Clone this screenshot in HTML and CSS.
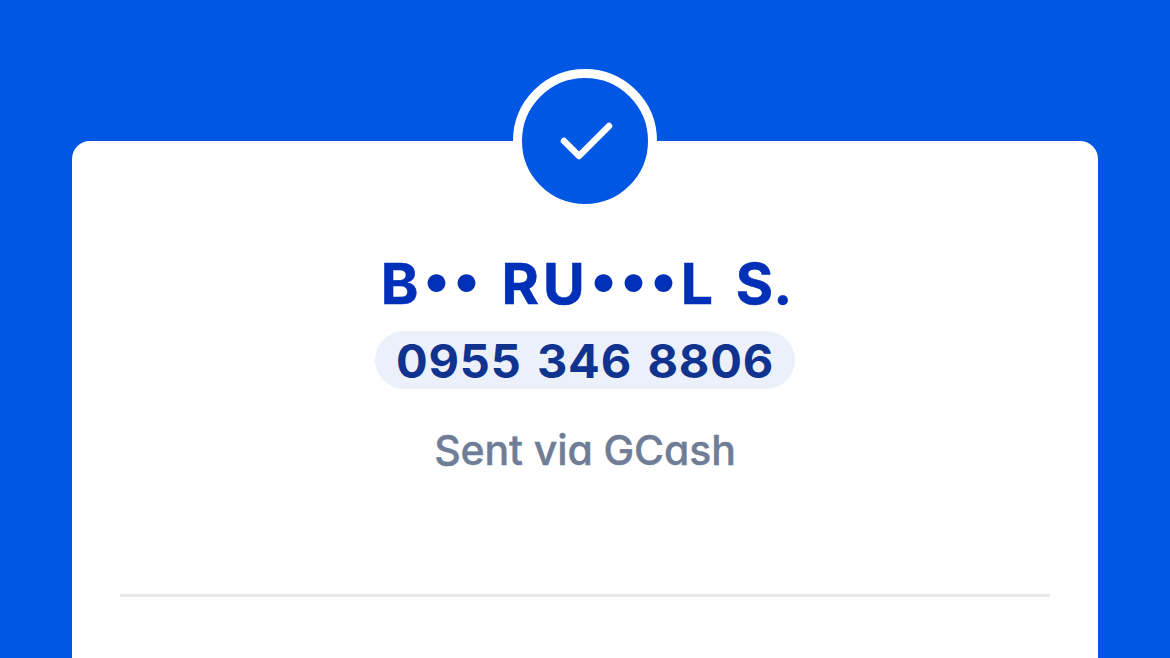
FILE: index.html
```html
<!DOCTYPE html>
<html lang="en">
<head>
    <meta charset="UTF-8">
    <meta name="viewport" content="width=device-width, initial-scale=1.0">
    <title>GCash Receipt</title>
    <link rel="stylesheet" href="styles.css">
</head>
<body>
    <main class="receipt">
        <div class="status">
            <svg width="64" height="48" viewBox="0 0 64 48" fill="none">
                <path d="M11 24L26 39L56 9" stroke="white" stroke-width="6.5" stroke-linecap="round" stroke-linejoin="round"/>
            </svg>
        </div>

        <h1 class="name">
            <span class="word"><span class="letters">B</span><span class="dot">•</span><span class="dot">•</span></span>
            <span class="word"><span class="letters wide">RU</span><span class="dot">•</span><span class="dot">•</span><span class="dot">•</span><span class="letters last">L</span></span>
            <span class="word">S.</span>
        </h1>
        <div class="phone">0955 346 8806</div>
        <p class="sent">Sent via GCash</p>
        <hr class="divider">
    </main>
</body>
</html>
```

FILE: styles.css
```css
* {
    box-sizing: border-box;
}
body {
    margin: 0;
    height: 658px;
    padding: 141px 72px 0;
    overflow: hidden;
    background-color: #0057e4;
    font-family: Inter, sans-serif;
}
.receipt {
    display: flex;
    flex-direction: column;
    align-items: center;
    height: 517px;
    padding: 0 48px;
    background-color: white;
    border-radius: 18px 18px 0 0;
}
.status {
    display: flex;
    align-items: center;
    justify-content: center;
    width: 144px;
    height: 144px;
    margin-top: -72px;
    border: 9px solid white;
    border-radius: 50%;
    background-color: #0057e4;
}
.name {
    display: flex;
    gap: 20px;
    height: 70px;
    margin: 35px 0 0;
    padding-left: 3px;
    color: #002fb8;
    font-size: 57px;
    font-weight: 700;
    line-height: 71px;
    white-space: nowrap;
    -webkit-text-stroke: 0.6px #002fb8;
}
.word {
    display: flex;
}
.letters {
    letter-spacing: 3px;
}
.wide {
    letter-spacing: 4px;
}
.last {
    margin-left: 2px;
}
.dot {
    width: 30px;
    line-height: 64px;
    text-align: center;
    -webkit-text-stroke: 0;
}
.phone {
    width: 420px;
    height: 58px;
    margin-top: 13px;
    border-radius: 29px;
    background-color: #ecf0fa;
    color: #10338f;
    font-size: 47px;
    font-weight: 700;
    line-height: 59px;
    text-align: center;
    letter-spacing: 0.8px;
    word-spacing: 3.5px;
}
.sent {
    margin: 36px 0 0;
    color: #6f7d96;
    font-size: 41px;
    font-weight: 500;
    font-feature-settings: "cv11";
    line-height: 50px;
    letter-spacing: -0.1px;
    -webkit-text-stroke: 0.4px #6f7d96;
}
.divider {
    width: 930px;
    height: 3px;
    margin: 119px 0 0;
    border: 0;
    background-color: #e8e9ed;
}
```
